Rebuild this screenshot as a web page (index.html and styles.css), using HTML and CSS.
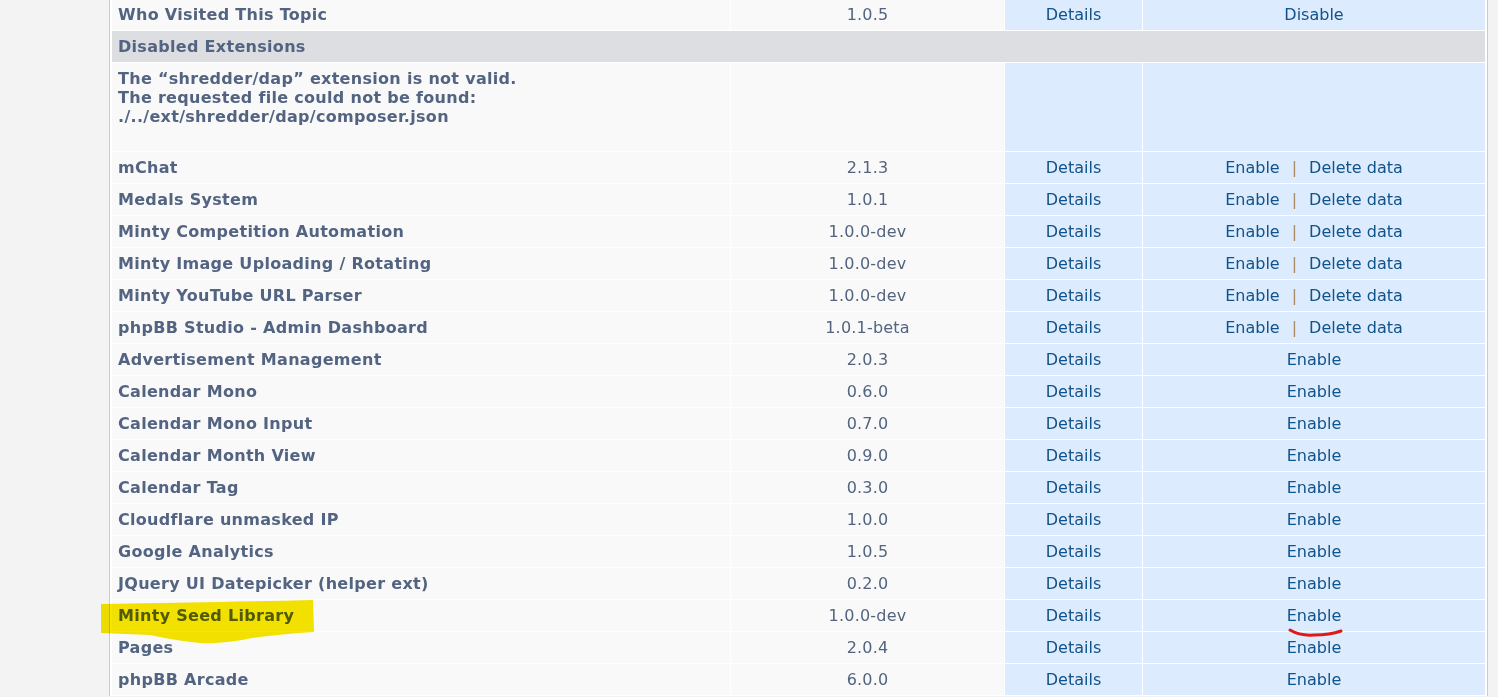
FILE: index.html
```html
<!DOCTYPE html>
<html>
<head>
<meta charset="utf-8">
<link rel="stylesheet" href="styles.css">
</head>
<body>
<div class="panel">
  <table class="ext">
    <colgroup>
      <col class="c-name"><col class="c-ver"><col class="c-det"><col class="c-act">
    </colgroup>
    <tbody>
      <tr><td class="name">Who Visited This Topic</td><td class="ver">1.0.5</td><td class="act"><a href="#">Details</a></td><td class="act"><a href="#">Disable</a></td></tr>
      <tr class="section"><td colspan="4">Disabled Extensions</td></tr>
      <tr class="error"><td class="name">The “shredder/dap” extension is not valid.<br>The requested file could not be found:<br>./../ext/shredder/dap/composer.json</td><td class="ver"></td><td class="act"></td><td class="act"></td></tr>
      <tr><td class="name">mChat</td><td class="ver">2.1.3</td><td class="act"><a href="#">Details</a></td><td class="act"><a href="#">Enable</a><span class="sep">|</span><a href="#">Delete data</a></td></tr>
      <tr><td class="name">Medals System</td><td class="ver">1.0.1</td><td class="act"><a href="#">Details</a></td><td class="act"><a href="#">Enable</a><span class="sep">|</span><a href="#">Delete data</a></td></tr>
      <tr><td class="name">Minty Competition Automation</td><td class="ver">1.0.0-dev</td><td class="act"><a href="#">Details</a></td><td class="act"><a href="#">Enable</a><span class="sep">|</span><a href="#">Delete data</a></td></tr>
      <tr><td class="name">Minty Image Uploading / Rotating</td><td class="ver">1.0.0-dev</td><td class="act"><a href="#">Details</a></td><td class="act"><a href="#">Enable</a><span class="sep">|</span><a href="#">Delete data</a></td></tr>
      <tr><td class="name">Minty YouTube URL Parser</td><td class="ver">1.0.0-dev</td><td class="act"><a href="#">Details</a></td><td class="act"><a href="#">Enable</a><span class="sep">|</span><a href="#">Delete data</a></td></tr>
      <tr><td class="name">phpBB Studio - Admin Dashboard</td><td class="ver">1.0.1-beta</td><td class="act"><a href="#">Details</a></td><td class="act"><a href="#">Enable</a><span class="sep">|</span><a href="#">Delete data</a></td></tr>
      <tr><td class="name">Advertisement Management</td><td class="ver">2.0.3</td><td class="act"><a href="#">Details</a></td><td class="act"><a href="#">Enable</a></td></tr>
      <tr><td class="name">Calendar Mono</td><td class="ver">0.6.0</td><td class="act"><a href="#">Details</a></td><td class="act"><a href="#">Enable</a></td></tr>
      <tr><td class="name">Calendar Mono Input</td><td class="ver">0.7.0</td><td class="act"><a href="#">Details</a></td><td class="act"><a href="#">Enable</a></td></tr>
      <tr><td class="name">Calendar Month View</td><td class="ver">0.9.0</td><td class="act"><a href="#">Details</a></td><td class="act"><a href="#">Enable</a></td></tr>
      <tr><td class="name">Calendar Tag</td><td class="ver">0.3.0</td><td class="act"><a href="#">Details</a></td><td class="act"><a href="#">Enable</a></td></tr>
      <tr><td class="name">Cloudflare unmasked IP</td><td class="ver">1.0.0</td><td class="act"><a href="#">Details</a></td><td class="act"><a href="#">Enable</a></td></tr>
      <tr><td class="name">Google Analytics</td><td class="ver">1.0.5</td><td class="act"><a href="#">Details</a></td><td class="act"><a href="#">Enable</a></td></tr>
      <tr><td class="name">JQuery UI Datepicker (helper ext)</td><td class="ver">0.2.0</td><td class="act"><a href="#">Details</a></td><td class="act"><a href="#">Enable</a></td></tr>
      <tr><td class="name">Minty Seed Library</td><td class="ver">1.0.0-dev</td><td class="act"><a href="#">Details</a></td><td class="act"><a href="#">Enable</a></td></tr>
      <tr><td class="name">Pages</td><td class="ver">2.0.4</td><td class="act"><a href="#">Details</a></td><td class="act"><a href="#">Enable</a></td></tr>
      <tr><td class="name">phpBB Arcade</td><td class="ver">6.0.0</td><td class="act"><a href="#">Details</a></td><td class="act"><a href="#">Enable</a></td></tr>
    </tbody>
  </table>
</div>
<svg class="marks" width="1498" height="697" viewBox="0 0 1498 697">
  <path class="hl" d="M101,604 Q160,603 220,602 Q270,601 313,600 L314,632 Q280,634 252,638 Q226,644 200,643 Q178,641 150,635 L101,633 Z"/>
  <path class="ul" d="M1290,630 Q1300,636 1314,635 Q1330,635 1341,631"/>
</svg>
</body>
</html>
```
FILE: styles.css
```css
html, body {
  margin: 0;
  padding: 0;
}
body {
  background: #f3f3f3;
  font-family: "DejaVu Sans", Verdana, sans-serif;
  font-size: 16px;
  line-height: 19px;
  color: #536482;
  overflow: hidden;
  height: 697px;
  position: relative;
}
.panel {
  margin: -2px 0 0 109px;
  width: 1376px;
  border-left: 1px solid #cccccc;
  border-right: 1px solid #cccccc;
  padding-left: 1px;
  background: #ffffff;
}
.ext {
  table-layout: fixed;
  border-collapse: separate;
  border-spacing: 1px;
  width: 1375px;
  background: #ffffff;
}
.c-name { width: 618px; }
.c-ver { width: 273px; }
.c-det { width: 137px; }
.c-act { width: 342px; }
.ext td {
  padding: 6px 6px;
  height: 19px;
  background: #f9f9f9;
  white-space: nowrap;
  overflow: hidden;
}
.ext td.name {
  font-weight: bold;
  letter-spacing: 0.3px;
  text-align: left;
}
.ext td.ver {
  text-align: center;
  letter-spacing: 0.2px;
}
.ext td.act {
  background: #dcebfe;
  text-align: center;
}
.ext a {
  color: #105289;
  text-decoration: none;
}
.sep {
  color: #a88a66;
  margin: 0 12px;
}
.section td {
  background: #dcdee1;
  font-weight: bold;
  letter-spacing: 0.3px;
}
.error td {
  vertical-align: top;
  padding-bottom: 25px;
}
.marks {
  position: absolute;
  left: 0;
  top: 0;
  pointer-events: none;
}
.hl {
  fill: #f7e600;
  mix-blend-mode: multiply;
}
.ul {
  fill: none;
  stroke: #e01818;
  stroke-width: 3;
  stroke-linecap: round;
}
```
